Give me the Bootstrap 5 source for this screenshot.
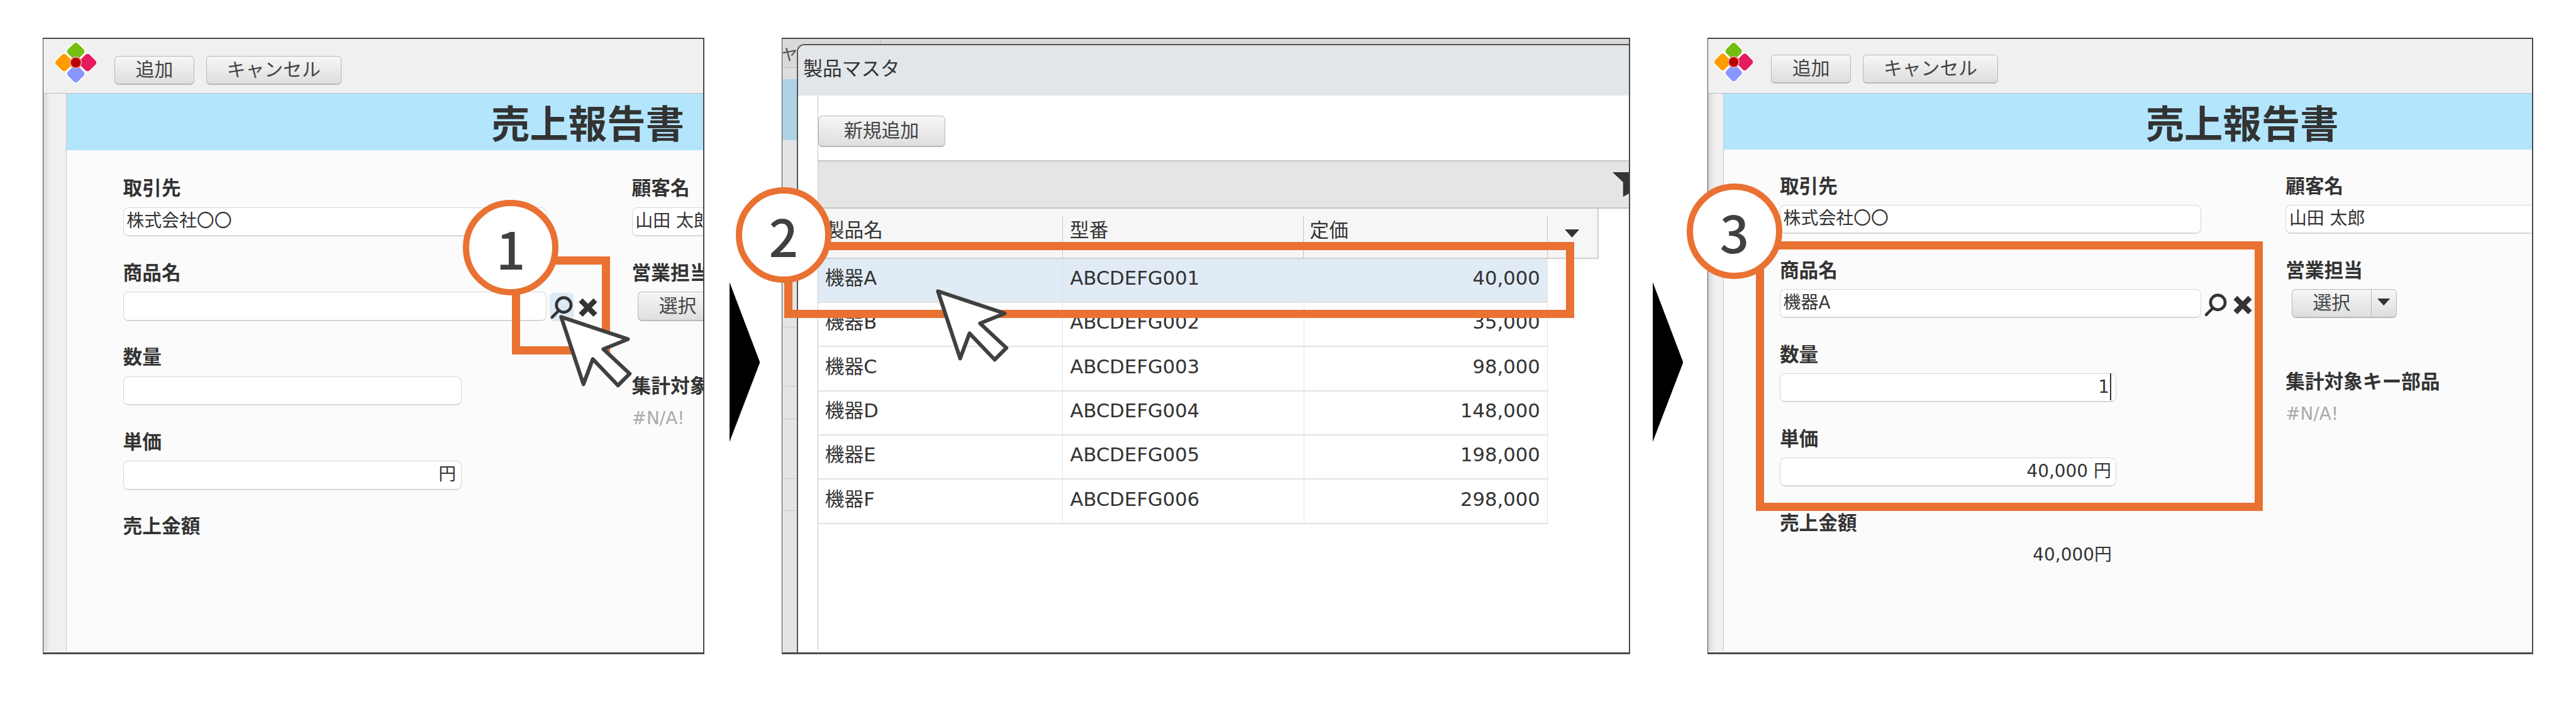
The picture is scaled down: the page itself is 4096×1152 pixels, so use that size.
<!DOCTYPE html>
<html lang="ja">
<head>
<meta charset="utf-8">
<title>売上報告書</title>
<link href="https://cdn.jsdelivr.net/npm/bootstrap@5.3.0/dist/css/bootstrap.min.css" rel="stylesheet">
<style>
html,body{margin:0;background:#fff;overflow:hidden}
body{font-family:"DejaVu Sans","Noto Sans CJK JP",sans-serif;color:#333;font-size:27.9px}
.stage{position:relative;width:4096px;height:1152px;padding:59.6px 0 0 68px;overflow:hidden}
.shot{height:981.2px;flex:none;overflow:hidden;border:solid #4a4a4a;border-width:2.8px 2.8px 3.7px 1.9px;position:relative}
.p1{width:1051.9px;--sb:37.2px;--logo-w:65.2px;--logo-h:65.2px;--logo-ml:18.6px;--btn-mt:27px;--btn-ml:28.9px;--col:809px;--in:673px;--short:538px;--hh:90.3px;--pt:41px;--rh:179.7px;--tt:674.9px;--row:134.5px}
.p3{width:1312.6px;--sb:24.2px;--logo-w:61.4px;--logo-h:63.3px;--logo-ml:9.3px;--btn-mt:25.1px;--btn-ml:28.9px;--col:804.3px;--in:670.3px;--short:535.3px;--hh:89.4px;--pt:38.2px;--rh:176.9px;--tt:671.2px;--row:134px}
.bararrow{flex:none;width:48.4px;height:254.1px;margin-top:389.1px}
.a1{margin-left:40px;margin-right:34.4px}
.a2{margin-left:36.3px;margin-right:39.1px}
.p2{width:1348.9px}
.toolbar{height:87.5px;background:#f0f0f0;border-bottom:1.9px solid #bdbdbd}
.logo{width:var(--logo-w);height:var(--logo-h);margin:5.6px 0 0 var(--logo-ml);flex:none}
.gbtn{font-family:"Noto Sans CJK JP",sans-serif;font-size:29.8px;line-height:1;color:#444;height:46.5px;padding:0 0 4.7px;border:1.9px solid #b9b9b9;border-bottom-width:2.8px;border-radius:6.5px;background:linear-gradient(#f6f6f6,#dedede);display:flex;align-items:center;justify-content:center}
.gbtn:hover{color:#444;background:linear-gradient(#f6f6f6,#dedede);border-color:#b9b9b9}
.b-add{width:127.5px;margin:var(--btn-mt) 0 0 var(--btn-ml)}
.b-cancel{width:215px;margin:var(--btn-mt) 0 0 18.6px}
.formwrap{height:887.2px}
.side{width:var(--sb);flex:none;background:linear-gradient(90deg,#d9d9d9,#f0f0f0 11.2px);border-right:1.9px solid #c8c8c8}
.mainpane{flex:1;min-width:0;background:#fbfbfb}
.bluehead{height:var(--hh);background:#b3e5fc;padding-left:var(--tt);font-family:"Noto Sans CJK JP",sans-serif;font-weight:700;font-size:61.4px;line-height:var(--hh);white-space:nowrap}
.formbody{padding:var(--pt) 0 0 89.4px}
.lcol{width:var(--col);flex:none}
.rcol{flex:1;min-width:0}
.fld{height:var(--row)}
.fld-sel{height:var(--rh)}
.fldlabel{height:49.3px;line-height:33.5px;font-family:"Noto Sans CJK JP",sans-serif;font-weight:700;font-size:30.7px;white-space:nowrap;color:#333}
.inbox.form-control{height:46.5px;padding:0 7.4px 1.9px 4.7px;border:solid #d6d6d6;border-width:1.9px 1.9px 2.8px;border-radius:8.4px;background:#fff;font-size:27.9px;color:#333;display:flex;align-items:center;white-space:nowrap;min-height:0}
.w-long{width:var(--in);flex:none}
.w-short{width:var(--short)}
.inbox.form-control.w-right{width:calc(100% + 18.6px)}
.caret-bar{display:inline-block;width:1.9px;height:42.8px;background:#333;margin-left:.9px}
.searchic{flex:none;width:102.4px;height:52.1px;margin-left:5.6px;margin-top:-1.9px}
.selgrp{margin-left:9.3px}
.b-sel{width:127.5px}
.b-drop{width:41px}
.btn-group>.gbtn{flex:none}
.tri-sel{width:20.5px;height:11.2px}
.naval{color:#aaa;line-height:39.1px;margin-top:1.9px}
.total{width:var(--short);height:42.8px;line-height:42.8px;text-align:right;padding-right:7.4px}
/* product master window */
.bgcol{position:absolute;inset:0;background:#e4e4e4;overflow:hidden}
.bgtop{height:46.5px;background:#d9d9d9;border-bottom:1px solid #bdbdbd;padding-left:1.9px;font-family:"Noto Sans CJK JP",sans-serif;font-size:29.8px;line-height:33.5px;color:#555;white-space:nowrap;position:relative;overflow:hidden}
.bgtop-txt{margin-left:-35.4px;padding-top:3.7px;display:block}
.bgsep{position:absolute;left:155.5px;top:0;bottom:0;border-left:1.9px solid #bbb}
.bggap{height:17.7px;background:#dedede}
.bgblue{height:97.7px;background:#add3e5}
.bgline{border-bottom:1.9px solid #c9c9c9}
.h-320{height:297.9px}.h-101{height:94px}.h-55{height:51.2px}.h-102{height:95px}
.dialog{position:absolute;left:23.3px;top:8.4px;right:0;bottom:0;background:#fff;border-left:2.8px solid #555;border-top:2.8px solid #555;border-top-left-radius:12.1px;overflow:hidden}
.dlgtitle{height:80px;background:#e2e6ea;padding-left:8.4px;font-family:"Noto Sans CJK JP",sans-serif;font-size:30.7px;line-height:70.7px;color:#333}
.dlgbody{margin-left:30.7px;height:883.4px;border-left:1.9px solid #c8c8c8}
.b-new{width:202px;height:50.3px;position:relative;top:31.7px}
.dlgspace{height:103.3px}
.graybar{height:76.3px;background:#e5e5e5;border-top:2.8px solid #c4c4c4;border-bottom:2.8px solid #c4c4c4;overflow:hidden}
.funnel{width:50.3px;height:39.1px;margin-right:-25.1px;margin-top:16.8px;flex:none}
.mastertbl.table{width:1240px;table-layout:fixed;margin:0;--bs-table-bg:transparent;font-size:30.7px;color:#333}
.mastertbl th{padding:11.2px 0 0;height:78.2px;background:#f6f6f6;font-weight:400;border:0;border-bottom:2.8px solid #cfcfcf;color:#333}
.mastertbl th.thlast{border-right:2.8px solid #cfcfcf;vertical-align:top}
.thin{height:67px;border-right:1.9px solid #c4c4c4;padding:0 0 18.6px 11.2px;display:flex;align-items:center}
.thin-f{padding-left:9.3px}
.c1{width:389.1px}.c2{width:383.5px}.c3{width:387.3px}.c4{width:80.1px}
.dropmark{width:23.3px;height:13px;display:block;margin:22.3px 0 0 27.9px}
.mastertbl td{height:70.3px;padding:0 11.2px 5.6px;vertical-align:middle;border:solid #e2e2e2;border-width:0 1.9px 2.8px 0;white-space:nowrap;color:#333}
.mastertbl td.c-blank{border:0}
.mastertbl tr.rowsel td:not(.c-blank){background:#e0ebf5}
.mastertbl td.cnum{text-align:right}
/* callouts */
.frame{position:absolute;border:13px solid #e97132;pointer-events:none}
.f1{left:813.6px;top:407.7px;width:156.4px;height:156.4px}
.f2{left:1247.4px;top:384.5px;width:1255.8px;height:121px}
.f3{left:2791.8px;top:383.5px;width:806.2px;height:429.1px}
.stepmark{position:absolute;width:151.7px;height:151.7px;border:10.2px solid #e97132;border-radius:50%;background:#fff;font-family:"Noto Sans CJK JP",sans-serif;font-weight:500;font-size:81.9px;line-height:1;color:#404040;display:flex;align-items:center;justify-content:center}
.s1{left:736.3px;top:318.4px}
.s2{left:1170.1px;top:297.9px}
.s3{left:2681.9px;top:292.3px}
.pointer{position:absolute;width:125.7px;height:125.7px}
.c-a{left:882.5px;top:495.2px}
.c-b{left:1482px;top:454.3px}
</style>
</head>
<body>
<svg width="0" height="0" class="position-absolute">
  <defs>
    <symbol id="logo" viewBox="0 0 70 70">
      <g stroke="#fff" stroke-width="2">
        <rect x="22" y="3" width="26" height="26" rx="6" fill="#74bf12" transform="rotate(45 35 16)"/>
        <rect x="2" y="22" width="26" height="26" rx="6" fill="#ff9c00" transform="rotate(45 15 35)"/>
        <rect x="42" y="22" width="26" height="26" rx="6" fill="#e61a5f" transform="rotate(45 55 35)"/>
        <rect x="22" y="41" width="26" height="26" rx="6" fill="#8a96ff" transform="rotate(45 35 54)"/>
      </g>
      <circle cx="35" cy="35" r="9.5" fill="#bb0000" stroke="#e8a0a0" stroke-width="2"/>
    </symbol>
    <symbol id="pointer-shape" viewBox="0 0 135 135">
      <path d="M10 10 L124 48 L82 65 L127 107 L107 127 L64 82 L48 125 Z" fill="#fff" stroke="#404040" stroke-width="6.5" stroke-linejoin="round"/>
    </symbol>
  </defs>
</svg>

<div class="stage d-flex align-items-start">

  <!-- panel 1 -->
  <div class="shot p1">
    <div class="toolbar d-flex align-items-start">
      <svg class="logo"><use href="#logo"/></svg>
      <button type="button" class="btn gbtn b-add">追加</button>
      <button type="button" class="btn gbtn b-cancel">キャンセル</button>
    </div>
    <div class="d-flex formwrap">
      <div class="side"></div>
      <div class="mainpane">
        <div class="bluehead">売上報告書</div>
        <div class="formbody d-flex">
          <div class="lcol">
            <div class="fld">
              <div class="fldlabel">取引先</div>
              <div class="inbox form-control w-long">株式会社〇〇</div>
            </div>
            <div class="fld">
              <div class="fldlabel">商品名</div>
              <div class="d-flex align-items-start">
                <div class="inbox form-control w-long"></div>
                <svg class="searchic" viewBox="0 0 110 56">
                  <rect x="0" y="4" width="41" height="49" rx="7" fill="#dde9f3"/>
                  <circle cx="24" cy="25" r="12.5" fill="none" stroke="#333" stroke-width="5"/>
                  <path d="M15 35 L4 46" stroke="#333" stroke-width="5" stroke-linecap="round"/>
                  <path d="M53 17 L78 42 M78 17 L53 42" stroke="#333" stroke-width="9"/>
                </svg>
              </div>
            </div>
            <div class="fld">
              <div class="fldlabel">数量</div>
              <div class="inbox form-control w-short"></div>
            </div>
            <div class="fld">
              <div class="fldlabel">単価</div>
              <div class="inbox form-control w-short justify-content-end">円</div>
            </div>
            <div class="fld">
              <div class="fldlabel">売上金額</div>
            </div>
          </div>
          <div class="rcol">
            <div class="fld">
              <div class="fldlabel">顧客名</div>
              <div class="inbox form-control w-right">山田 太郎</div>
            </div>
            <div class="fld-sel">
              <div class="fldlabel">営業担当</div>
              <div class="btn-group selgrp">
                <button type="button" class="btn gbtn b-sel">選択</button>
                <button type="button" class="btn gbtn b-drop"><svg class="tri-sel" viewBox="0 0 22 12"><polygon points="0,0 22,0 11,12" fill="#333"/></svg></button>
              </div>
            </div>
            <div class="fldlabel">集計対象キー部品</div>
            <div class="naval">#N/A!</div>
          </div>
        </div>
      </div>
    </div>
  </div>

  <svg class="bararrow a1" viewBox="0 0 52 273"><polygon points="0,0 52,137 0,273" fill="#000"/></svg>

  <!-- panel 2 -->
  <div class="shot p2">
    <div class="bgcol">
      <div class="bgtop"><span class="bgtop-txt">キャンセル</span><span class="bgsep"></span></div>
      <div class="bggap"></div>
      <div class="bgblue"></div>
      <div class="bgline h-320"></div>
      <div class="bgline h-101"></div>
      <div class="bgline h-55"></div>
      <div class="bgline h-102"></div>
      <div class="bgline h-55"></div>
    </div>
    <div class="dialog">
      <div class="dlgtitle">製品マスタ</div>
      <div class="dlgbody">
        <div class="dlgspace"><button type="button" class="btn gbtn b-new">新規追加</button></div>
        <div class="graybar d-flex justify-content-end">
          <svg class="funnel" viewBox="0 0 54 42"><polygon points="0,0 54,0 36,17 36,32 18,42 18,17" fill="#333"/></svg>
        </div>
        <table class="table mastertbl">
          <colgroup><col class="c1"><col class="c2"><col class="c3"><col class="c4"></colgroup>
          <thead>
            <tr>
              <th><div class="thin">製品名</div></th>
              <th><div class="thin">型番</div></th>
              <th><div class="thin thin-f">定価</div></th>
              <th class="thlast"><svg class="dropmark" viewBox="0 0 25 14"><polygon points="0,0 25,0 12.5,14" fill="#333"/></svg></th>
            </tr>
          </thead>
          <tbody>
            <tr class="rowsel"><td>機器A</td><td>ABCDEFG001</td><td class="cnum">40,000</td><td class="c-blank"></td></tr>
            <tr><td>機器B</td><td>ABCDEFG002</td><td class="cnum">35,000</td><td class="c-blank"></td></tr>
            <tr><td>機器C</td><td>ABCDEFG003</td><td class="cnum">98,000</td><td class="c-blank"></td></tr>
            <tr><td>機器D</td><td>ABCDEFG004</td><td class="cnum">148,000</td><td class="c-blank"></td></tr>
            <tr><td>機器E</td><td>ABCDEFG005</td><td class="cnum">198,000</td><td class="c-blank"></td></tr>
            <tr><td>機器F</td><td>ABCDEFG006</td><td class="cnum">298,000</td><td class="c-blank"></td></tr>
          </tbody>
        </table>
      </div>
    </div>
  </div>

  <svg class="bararrow a2" viewBox="0 0 52 273"><polygon points="0,0 52,137 0,273" fill="#000"/></svg>

  <!-- panel 3 -->
  <div class="shot p3">
    <div class="toolbar d-flex align-items-start">
      <svg class="logo" preserveAspectRatio="none" viewBox="0 0 70 70"><use href="#logo"/></svg>
      <button type="button" class="btn gbtn b-add">追加</button>
      <button type="button" class="btn gbtn b-cancel">キャンセル</button>
    </div>
    <div class="d-flex formwrap">
      <div class="side"></div>
      <div class="mainpane">
        <div class="bluehead">売上報告書</div>
        <div class="formbody d-flex">
          <div class="lcol">
            <div class="fld">
              <div class="fldlabel">取引先</div>
              <div class="inbox form-control w-long">株式会社〇〇</div>
            </div>
            <div class="fld">
              <div class="fldlabel">商品名</div>
              <div class="d-flex align-items-start">
                <div class="inbox form-control w-long">機器A</div>
                <svg class="searchic" viewBox="0 0 110 56">
                  <circle cx="22" cy="25" r="12.5" fill="none" stroke="#333" stroke-width="5"/>
                  <path d="M13 35 L2 46" stroke="#333" stroke-width="5" stroke-linecap="round"/>
                  <path d="M52 17 L77 42 M77 17 L52 42" stroke="#333" stroke-width="9"/>
                </svg>
              </div>
            </div>
            <div class="fld">
              <div class="fldlabel">数量</div>
              <div class="inbox form-control w-short justify-content-end">1<span class="caret-bar"></span></div>
            </div>
            <div class="fld">
              <div class="fldlabel">単価</div>
              <div class="inbox form-control w-short justify-content-end">40,000 円</div>
            </div>
            <div class="fldlabel">売上金額</div>
            <div class="total">40,000円</div>
          </div>
          <div class="rcol">
            <div class="fld">
              <div class="fldlabel">顧客名</div>
              <div class="inbox form-control w-right">山田 太郎</div>
            </div>
            <div class="fld-sel">
              <div class="fldlabel">営業担当</div>
              <div class="btn-group selgrp">
                <button type="button" class="btn gbtn b-sel">選択</button>
                <button type="button" class="btn gbtn b-drop"><svg class="tri-sel" viewBox="0 0 22 12"><polygon points="0,0 22,0 11,12" fill="#333"/></svg></button>
              </div>
            </div>
            <div class="fldlabel">集計対象キー部品</div>
            <div class="naval">#N/A!</div>
          </div>
        </div>
      </div>
    </div>
  </div>

  <!-- callouts -->
  <div class="frame f1"></div>
  <div class="frame f2"></div>
  <div class="frame f3"></div>
  <div class="stepmark s1">1</div>
  <div class="stepmark s2">2</div>
  <div class="stepmark s3">3</div>
  <svg class="pointer c-a"><use href="#pointer-shape"/></svg>
  <svg class="pointer c-b"><use href="#pointer-shape"/></svg>
</div>
<script src="https://cdn.jsdelivr.net/npm/bootstrap@5.3.0/dist/js/bootstrap.bundle.min.js"></script>
</body>
</html>
